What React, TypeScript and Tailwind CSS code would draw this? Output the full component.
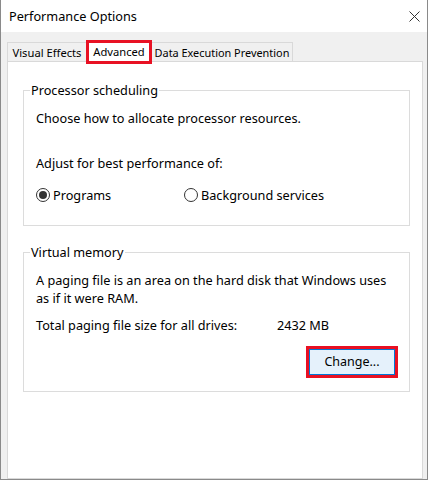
const Radio = ({ checked, label }: { checked?: boolean; label: string }) => (
  <div className="flex items-center gap-[3px]">
    <span className="flex h-[14px] w-[14px] items-center justify-center rounded-full border border-[#333] bg-white">
      {checked && <span className="h-[8px] w-[8px] rounded-full bg-[#333]"></span>}
    </span>
    <span>{label}</span>
  </div>
);

const Group = ({ title, className, children }: { title: string; className: string; children: React.ReactNode }) => (
  <div className={`relative ml-[15px] w-[387px] border border-[#dcdcdc] px-[12px] ${className}`}>
    <span className="absolute -top-[10px] left-[6px] bg-white px-[1px] leading-[18px]">{title}</span>
    {children}
  </div>
);

const App = () => {
  return (
    <div
      className="flex h-[480px] w-[428px] flex-col border-x border-b border-[#8a8a8a] bg-white text-[12.7px] leading-[18px] text-black"
      style={{ fontFamily: '"Noto Sans", "Open Sans", sans-serif' }}
    >
      <div className="flex h-[32px] items-center justify-between bg-white pl-[8px] pr-[7px]">
        <span className="text-[12.7px]">Performance Options</span>
        <svg width="11" height="11" viewBox="0 0 11 11" className="text-[#333]">
          <path d="M0.5 0.5L10.5 10.5M10.5 0.5L0.5 10.5" stroke="currentColor" strokeWidth="1" />
        </svg>
      </div>

      <div className="flex flex-1 flex-col bg-[#f0f0f0] pl-[6px] pr-[4px] pt-[8px]">
        <div className="flex items-end text-[11.2px] leading-[17px]">
          <div className="flex h-[19px] w-[79px] items-center justify-center border-l border-t border-[#d9d9d9]">
            Visual Effects
          </div>
          <div className="relative z-10 -mb-[3px] flex h-[24px] w-[66px] items-start justify-center border-[3px] border-[#e81123] bg-white">
            Advanced
          </div>
          <div className="flex h-[19px] w-[141px] items-center justify-center border-r border-t border-[#d9d9d9] text-[10.9px]">
            Data Execution Prevention
          </div>
        </div>

        <div className="flex-1 border border-[#d9d9d9] bg-white">
          <Group title="Processor scheduling" className="mt-[28px] h-[136px] pt-[18px]">
            <div>Choose how to allocate processor resources.</div>
            <div className="mt-[27px]">Adjust for best performance of:</div>
            <div className="mt-[14px] flex">
              <div className="w-[148px]">
                <Radio checked label="Programs" />
              </div>
              <Radio label="Background services" />
            </div>
          </Group>

          <Group title="Virtual memory" className="mt-[26px] h-[140px] pt-[18px]">
            <div>
              A paging file is an area on the hard disk that Windows uses
              <br />
              as if it were RAM.
            </div>
            <div className="mt-[9px] flex">
              <span className="w-[241px]">Total paging file size for all drives:</span>
              <span>2432 MB</span>
            </div>
            <div className="mt-[12px] flex justify-end">
              <div className="mr-[-1px] h-[32px] w-[92px] border-[3px] border-[#e81123]">
                <button className="flex h-full w-full items-center justify-center border border-[#0078d7] bg-[#e5f1fb] text-[12.5px]">
                  Change...
                </button>
              </div>
            </div>
          </Group>
        </div>
      </div>
    </div>
  );
};

export default App;
